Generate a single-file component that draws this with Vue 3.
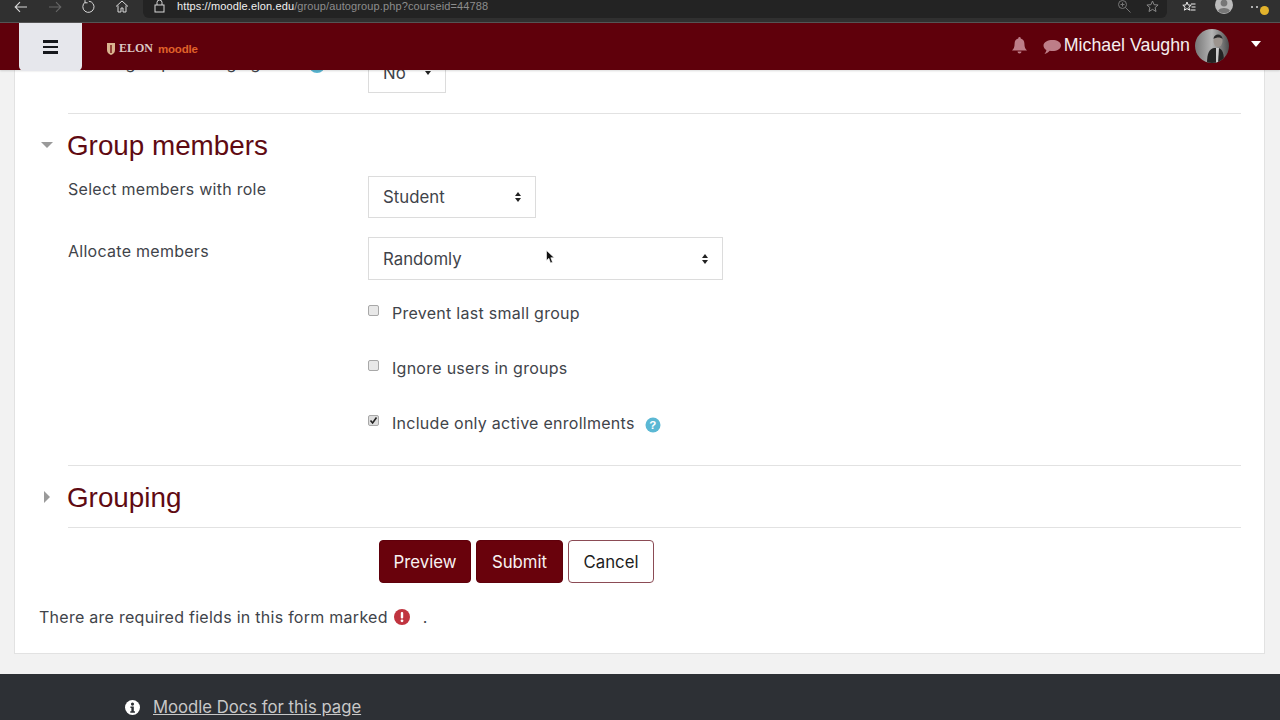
<script setup>
const checks = [
  { label: 'Prevent last small group', on: false },
  { label: 'Ignore users in groups', on: false },
  { label: 'Include only active enrollments', on: true, help: true },
]
</script>

<template>
  <div class="page">
    <div class="chrome">
      <div class="nav-icons">
        <svg width="14" height="12" viewBox="0 0 14 12" class="ci"><path d="M13 6H1.500M6 1.200 1.200 6 6 10.800" fill="none" stroke="#d8d8d8" stroke-width="1.100"/></svg>
        <svg width="14" height="12" viewBox="0 0 14 12" class="ci dim"><path d="M1 6h11.500M8 1.200 12.800 6 8 10.800" fill="none" stroke="#666" stroke-width="1.100"/></svg>
        <svg width="14" height="14" viewBox="0 0 14 14" class="ci"><path d="M4.200 2.200a5.600 5.600 0 1 0 3.600-1M4 .2v2.600h2.600" fill="none" stroke="#d8d8d8" stroke-width="1"/></svg>
        <svg width="14" height="13" viewBox="0 0 14 13" class="ci"><path d="M1 6.500 7 1l6 5.500M3 5.500V12h3V8h2v4h3V5.500" fill="none" stroke="#d8d8d8" stroke-width="1"/></svg>
      </div>
      <div class="omnibox">
        <svg width="11" height="14" viewBox="0 0 11 14" class="lock"><rect x="1" y="6" width="9" height="7" fill="none" stroke="#d8d8d8" stroke-width="1"/><path d="M3 6V3.500a2.500 2.500 0 0 1 5 0V6" fill="none" stroke="#d8d8d8" stroke-width="1"/></svg>
        <span class="url"><span class="scheme">https://</span><b>moodle.elon.edu</b><span class="path">/group/autogroup.php?courseid=44788</span></span>
        <span class="grow"></span>
        <svg width="14" height="14" viewBox="0 0 14 14" class="o1"><circle cx="5.500" cy="5.500" r="4" fill="none" stroke="#777"/><path d="m8.500 8.500 5 5M3.500 5.500h4M5.500 3.500v4" stroke="#777" fill="none"/></svg>
        <svg width="13" height="13" viewBox="0 0 13 13" class="o2"><path d="m6.500 1 1.600 3.700 4 .3-3 2.600.9 3.900-3.500-2.100L3 11.500l.9-3.900-3-2.600 4-.3z" fill="none" stroke="#888"/></svg>
      </div>
      <div class="chrome-right">
        <svg width="14" height="12" viewBox="0 0 14 12"><path d="m5 1 1.200 3 3 .2-2.300 2 .7 3-2.600-1.600L2.400 9.200l.7-3-2.300-2 3-.2z" fill="none" stroke="#eee"/><path d="M9 3h4.500M9.500 6h4M8.500 9h5" stroke="#eee"/></svg>
        <svg width="18" height="18" viewBox="0 0 18 18" class="acct"><circle cx="9" cy="9" r="9" fill="#bbb"/><circle cx="9" cy="7" r="3.400" fill="#777"/><path d="M3 15c1-4 11-4 12 0a9 9 0 0 1-12 0z" fill="#777"/></svg>
        <div class="menu-dots"><i></i><i></i><span class="upd"></span></div>
      </div>
    </div>

    <header class="navbar">
      <button class="burger" aria-label="Menu"><span></span><span></span><span></span></button>
      <div class="brand">
        <svg width="8" height="12" viewBox="0 0 8 12"><path d="M0 0h8v7c0 3-2 4-4 5-2-1-4-2-4-5z" fill="#d9b48f"/><path d="M4 2v8" stroke="#7a1a1a" stroke-width="1.500"/></svg>
        <span class="elon">ELON</span>
        <span class="moodle">moodle</span>
      </div>
      <span class="grow"></span>
      <svg class="bell" width="17" height="17" viewBox="0 0 17 17"><path d="M8.500 0a1.300 1.300 0 0 1 1.200 1.500C12 2 13.400 4 13.400 6.500c0 4 1 5.500 2.600 7H1c1.600-1.500 2.600-3 2.600-7C3.600 4 5 2 7.300 1.500A1.300 1.300 0 0 1 8.500 0zM6.500 14.500h4a2 2 0 0 1-4 0z" fill="#bd7d88"/></svg>
      <svg class="bubble" width="18" height="16" viewBox="0 0 18 16"><path d="M9.500 1C14 1 18 3 18 6.500S14 12 9.500 12c-1 0-2-.1-2.800-.3C5.500 13 3.500 14.500 1.500 15c1-1.200 1.800-2.600 1.900-4C1.500 10 .5 8.400.5 6.500.5 3 5 1 9.500 1z" fill="#bd7d88"/></svg>
      <span class="user">Michael Vaughn</span>
      <svg class="avatar" width="34" height="34" viewBox="0 0 34 34">
        <defs>
          <clipPath id="av"><circle cx="17" cy="17" r="17"/></clipPath>
          <linearGradient id="wall" x1="0" x2="1"><stop offset="0" stop-color="#777"/><stop offset=".5" stop-color="#b5b5b5"/><stop offset="1" stop-color="#4d4d4d"/></linearGradient>
        </defs>
        <g clip-path="url(#av)">
          <rect width="34" height="34" fill="url(#wall)"/>
          <path d="M12 34c0-9 2-14 7-15h4c5 1 6 6 6 15z" fill="#232323"/>
          <path d="M21 19h3l-1 15h-2z" fill="#ccc"/>
          <ellipse cx="23" cy="12" rx="4.500" ry="6" fill="#9c948e"/>
          <path d="M18.500 10c0-6 9-6 9 0-2-2-6-2-9 0z" fill="#2a2a2a"/>
        </g>
      </svg>
      <span class="caret-white"></span>
    </header>

    <main class="main">
      <section class="card">
        <div class="row first-row">
          <label class="lbl">Enable group messaging</label>
          <div class="ctl">
            <span class="help-top"></span>
            <div class="select no-sel"><span>No</span><span class="mini-caret"></span></div>
          </div>
        </div>
        <hr class="rule rule-a" />

        <h3 class="heading h-open"><span class="tri-down"></span>Group members</h3>

        <div class="row role-row">
          <label class="lbl">Select members with role</label>
          <div class="select sel-role">
            <span>Student</span>
            <span class="updown"><i></i><i></i></span>
          </div>
        </div>

        <div class="row alloc-row">
          <label class="lbl">Allocate members</label>
          <div class="select sel-alloc">
            <span>Randomly</span>
            <span class="updown"><i></i><i></i></span>
          </div>
        </div>

        <div class="checks">
          <div v-for="c in checks" :key="c.label" class="check">
            <span class="box" :class="{ on: c.on }">
              <svg v-if="c.on" width="9" height="9" viewBox="0 0 9 9"><path d="M1.500 4.500 3.600 7 7.500 1.500" fill="none" stroke="#222" stroke-width="1.600"/></svg>
            </span>
            <span class="check-text">{{ c.label }}</span>
            <svg v-if="c.help" class="help" width="16" height="16" viewBox="0 0 16 16"><circle cx="8" cy="8" r="7.500" fill="#5bb8d4"/><text x="8" y="12" text-anchor="middle" class="q">?</text></svg>
          </div>
        </div>
        <hr class="rule rule-b" />

        <h3 class="heading h-closed"><span class="tri-right"></span>Grouping</h3>
        <hr class="rule rule-c" />

        <div class="actions">
          <button class="btn primary prev">Preview</button>
          <button class="btn primary sub">Submit</button>
          <button class="btn cancel">Cancel</button>
        </div>

        <p class="required">
          <span>There are required fields in this form marked</span>
          <svg width="16" height="16" viewBox="0 0 16 16" class="req"><circle cx="8" cy="8" r="8" fill="#c0343f"/><rect x="6.800" y="3" width="2.400" height="6.500" rx="1" fill="#fff"/><circle cx="8" cy="11.800" r="1.400" fill="#fff"/></svg>
          <span class="dot">.</span>
        </p>
      </section>
    </main>

    <footer class="footer">
      <svg width="15" height="15" viewBox="0 0 16 16"><circle cx="8" cy="8" r="8" fill="#fff"/><circle cx="8" cy="4.300" r="1.700" fill="#2d3035"/><path d="M5.800 7h3.600v5h1.200v1.500H5.600V12h1.200V8.500h-1z" fill="#2d3035"/></svg>
      <a class="doc">Moodle Docs for this page</a>
    </footer>

    <svg class="cursor" width="9" height="14" viewBox="0 0 9 14"><path d="M.5.500v10l2.400-2.200L4.500 13l2-.8-1.700-4.500h3.400z" fill="#111" stroke="#fff" stroke-width=".6"/></svg>
  </div>
</template>

<style scoped>
.page {
  position: relative;
  width: 1280px;
  height: 720px;
  overflow: hidden;
  display: flex;
  flex-direction: column;
  background: #f2f2f2;
  font-family: Inter, "Liberation Sans", Arial, sans-serif;
  color: #3f444a;
}
.grow { flex: 1; }

.chrome {
  height: 22px;
  flex: none;
  background: #303030;
  border-bottom: 1px solid #555;
  box-sizing: content-box;
  display: flex;
  align-items: center;
  overflow: hidden;
}
.nav-icons {
  display: flex;
  align-items: center;
  width: 143px;
  padding-left: 14px;
  box-sizing: border-box;
  gap: 19.500px;
  margin-top: -9px;
  flex: none;
}
.omnibox {
  flex: none;
  width: 1024px;
  height: 18px;
  box-sizing: border-box;
  background: #232323;
  border-radius: 0 0 6px 6px;
  align-self: flex-start;
  display: flex;
  align-items: center;
  padding: 0 8px 6px 11px;
}
.url { margin-left: 12px; font: 11px "Liberation Sans", sans-serif; letter-spacing: .12px; }
.url b { font-weight: 400; color: #f2f2f2; }
.url .scheme { color: #eee; }
.url .path { color: #8d8d8d; }
.o1 { margin-right: 15px; }
.chrome-right {
  flex: 1;
  display: flex;
  align-items: center;
  padding-left: 15px;
  gap: 19px;
  margin-top: -9px;
}
.acct { margin-top: -4px; }
.menu-dots { position: relative; display: flex; gap: 3px; margin-left: -1px; }
.menu-dots i { width: 2px; height: 2px; background: #ddd; border-radius: 50%; }
.upd { position: absolute; left: 9px; top: 0; width: 9px; height: 9px; border-radius: 50%; background: #e3b32c; }

.navbar {
  position: relative;
  z-index: 5;
  height: 47px;
  flex: none;
  background: #5f000b;
  display: flex;
  align-items: center;
  box-shadow: 0 1px 2px rgba(0, 0, 0, .15);
}
.burger {
  width: 63px;
  height: 48px;
  margin-left: 19px;
  border: 0;
  border-radius: 0 0 5px 5px;
  background: #e6e7ec;
  display: flex;
  flex-direction: column;
  align-items: center;
  justify-content: center;
  gap: 3px;
  padding: 0;
  margin-top: 1px;
}
.burger span { width: 15px; height: 2.500px; background: #16181c; }
.brand {
  display: flex;
  align-items: center;
  margin-left: 25px;
  margin-top: 4px;
}
.elon {
  margin-left: 4px;
  font-family: "Liberation Serif", serif;
  font-weight: 700;
  font-size: 12px;
  color: #dcc9c4;
}
.moodle {
  margin-left: 5px;
  font: 700 11.500px "Liberation Sans", sans-serif;
  color: #e0622a;
  letter-spacing: -.2px;
}
.bell { margin-right: 15px; margin-top: -2px; }
.bubble { margin-right: 3px; margin-top: 1px; }
.user { color: #f5eeee; font: 17.800px "Liberation Sans", sans-serif; margin-top: -3px; }
.avatar { margin-left: 5px; margin-top: -2px; }
.caret-white {
  margin-left: 22px;
  margin-right: 19px;
  margin-top: -6px;
  border-left: 5.500px solid transparent;
  border-right: 5.500px solid transparent;
  border-top: 6px solid #fff;
}

.main {
  flex: none;
  height: 604px;
  padding: 0 15px 0 14px;
  box-sizing: border-box;
}
.card {
  display: flow-root;
  height: 584px;
  background: #fff;
  border: 1px solid #e2e2e2;
  border-top: 0;
  box-sizing: border-box;
  padding: 0 23px 0 53px;
  font-size: 16px;
  letter-spacing: .27px;
}
.row { display: flex; }
.lbl { width: 300px; flex: none; line-height: 22px; }
.first-row { height: 41px; margin-top: -18px; }
.ctl { position: relative; }
.help-top {
  position: absolute;
  left: -59px;
  top: 5px;
  width: 16px;
  height: 16px;
  border-radius: 50%;
  background: #5bb8d4;
}
.select {
  display: flex;
  align-items: center;
  justify-content: space-between;
  box-sizing: border-box;
  background: #fff;
  border: 1px solid #dcdcdc;
  padding: 0 14px;
  color: #3f444a;
  font-size: 16.800px;
  letter-spacing: 0;
}
.no-sel { width: 78px; height: 41px; }
.mini-caret {
  border-left: 3.500px solid transparent;
  border-right: 3.500px solid transparent;
  border-top: 4px solid #222;
}
.sel-role { width: 168px; height: 42px; flex: none; }
.sel-alloc { width: 355px; height: 43px; flex: none; }
.updown { display: flex; flex-direction: column; gap: 2px; }
.updown i { display: block; border-left: 3.500px solid transparent; border-right: 3.500px solid transparent; }
.updown i:first-child { border-bottom: 4px solid #222; }
.updown i:last-child { border-top: 4px solid #222; }

.rule { border: 0; border-top: 1px solid #e2e2e2; margin: 0; }
.rule-a { margin-top: 20px; }

.heading {
  position: relative;
  margin: 0 0 0 -1px;
  font: 400 27.800px/32px "Liberation Sans", Arial, sans-serif;
  letter-spacing: 0;
  color: #5f0a12;
}
.h-open { margin-top: 16px; }
.h-closed { margin-top: 16px; }
.tri-down, .tri-right { position: absolute; }
.tri-down {
  left: -26px;
  top: 12px;
  border-left: 6px solid transparent;
  border-right: 6px solid transparent;
  border-top: 6px solid #9a9a9a;
}
.tri-right {
  left: -23px;
  top: 9px;
  border-top: 6px solid transparent;
  border-bottom: 6px solid transparent;
  border-left: 6px solid #9a9a9a;
}
.role-row { margin-top: 14px; }
.alloc-row { margin-top: 19px; }
.role-row .lbl { margin-top: 2px; }
.alloc-row .lbl { margin-top: 3px; }

.checks {
  margin-left: 300px;
  margin-top: 22px;
  display: flex;
  flex-direction: column;
  gap: 33px;
}
.check { display: flex; align-items: center; height: 22px; }
.box {
  width: 11px;
  height: 11px;
  flex: none;
  box-sizing: border-box;
  border-radius: 2px;
  background: #e8e8e8;
  border: 1px solid #a8a8a8;
  margin-top: -5px;
  display: flex;
  align-items: center;
  justify-content: center;
}
.box.on { background: #ddd; }
.check-text { margin-left: 13px; }
.help { margin-left: 10px; margin-top: 4px; }
.q { font: 700 11.500px "Liberation Sans", sans-serif; fill: #fff; }
.rule-b { margin-top: 31px; }
.rule-c { margin-top: 13px; }

.actions {
  display: flex;
  gap: 5px;
  margin-top: 12px;
  margin-left: 311px;
}
.btn {
  height: 43px;
  box-sizing: border-box;
  border-radius: 4px;
  font: 16.800px Inter, "Liberation Sans", Arial, sans-serif;
  padding: 0;
}
.primary { background: #69020c; border: 1px solid #5f000b; color: #f8f2f2; }
.prev { width: 92px; }
.sub { width: 87px; }
.cancel { width: 86px; background: #fff; border: 1px solid #8b4b55; color: #1d1d1d; }

.required {
  margin: 23px 0 0 -29px;
  display: flex;
  align-items: center;
  height: 22px;
}
.req { margin-left: 6px; }
.dot { margin-left: 13px; }

.footer {
  flex: 1;
  background: #2d3035;
  display: flex;
  align-items: center;
  padding: 20px 0 0 125px;
  box-sizing: border-box;
}
.doc {
  margin-left: 13px;
  color: #c8c8c8;
  font-size: 16.700px;
  text-decoration: underline;
}
.cursor { position: absolute; left: 546px; top: 250px; }
</style>
